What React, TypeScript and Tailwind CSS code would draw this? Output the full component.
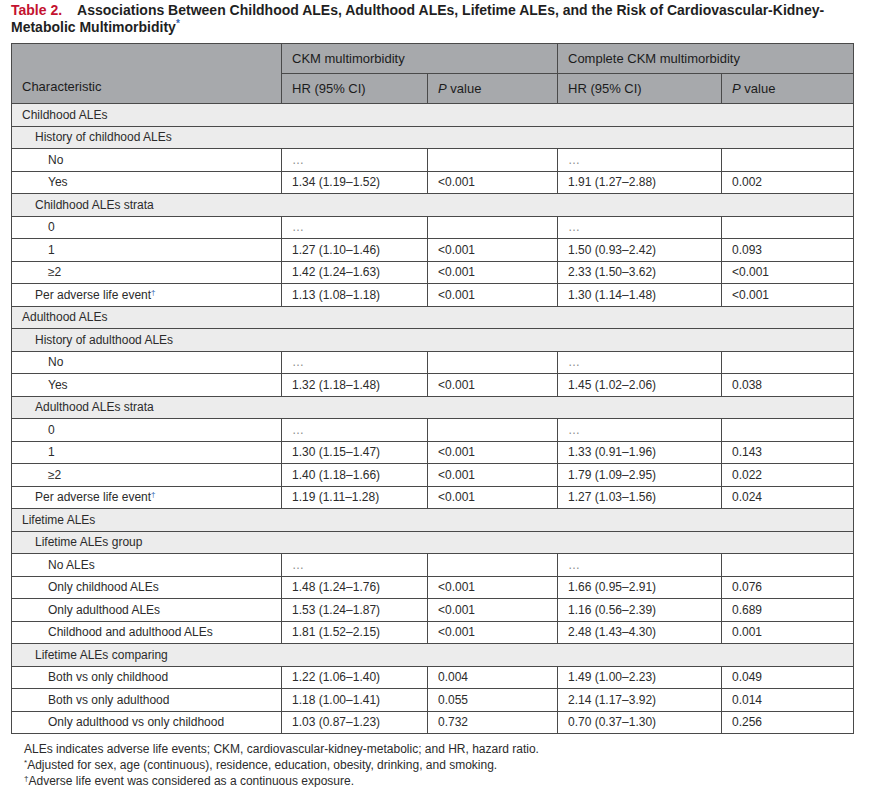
type Row = {
  label: string;
  level: 0 | 1 | 2;
  section?: boolean;
  dagger?: boolean;
  v?: [string, string, string, string];
};

const E = "…";

const rows: Row[] = [
  { label: "Childhood ALEs", level: 0, section: true },
  { label: "History of childhood ALEs", level: 1, section: true },
  { label: "No", level: 2, v: [E, "", E, ""] },
  { label: "Yes", level: 2, v: ["1.34 (1.19–1.52)", "<0.001", "1.91 (1.27–2.88)", "0.002"] },
  { label: "Childhood ALEs strata", level: 1, section: true },
  { label: "0", level: 2, v: [E, "", E, ""] },
  { label: "1", level: 2, v: ["1.27 (1.10–1.46)", "<0.001", "1.50 (0.93–2.42)", "0.093"] },
  { label: "≥2", level: 2, v: ["1.42 (1.24–1.63)", "<0.001", "2.33 (1.50–3.62)", "<0.001"] },
  { label: "Per adverse life event", level: 1, dagger: true, v: ["1.13 (1.08–1.18)", "<0.001", "1.30 (1.14–1.48)", "<0.001"] },
  { label: "Adulthood ALEs", level: 0, section: true },
  { label: "History of adulthood ALEs", level: 1, section: true },
  { label: "No", level: 2, v: [E, "", E, ""] },
  { label: "Yes", level: 2, v: ["1.32 (1.18–1.48)", "<0.001", "1.45 (1.02–2.06)", "0.038"] },
  { label: "Adulthood ALEs strata", level: 1, section: true },
  { label: "0", level: 2, v: [E, "", E, ""] },
  { label: "1", level: 2, v: ["1.30 (1.15–1.47)", "<0.001", "1.33 (0.91–1.96)", "0.143"] },
  { label: "≥2", level: 2, v: ["1.40 (1.18–1.66)", "<0.001", "1.79 (1.09–2.95)", "0.022"] },
  { label: "Per adverse life event", level: 1, dagger: true, v: ["1.19 (1.11–1.28)", "<0.001", "1.27 (1.03–1.56)", "0.024"] },
  { label: "Lifetime ALEs", level: 0, section: true },
  { label: "Lifetime ALEs group", level: 1, section: true },
  { label: "No ALEs", level: 2, v: [E, "", E, ""] },
  { label: "Only childhood ALEs", level: 2, v: ["1.48 (1.24–1.76)", "<0.001", "1.66 (0.95–2.91)", "0.076"] },
  { label: "Only adulthood ALEs", level: 2, v: ["1.53 (1.24–1.87)", "<0.001", "1.16 (0.56–2.39)", "0.689"] },
  { label: "Childhood and adulthood ALEs", level: 2, v: ["1.81 (1.52–2.15)", "<0.001", "2.48 (1.43–4.30)", "0.001"] },
  { label: "Lifetime ALEs comparing", level: 1, section: true },
  { label: "Both vs only childhood", level: 2, v: ["1.22 (1.06–1.40)", "0.004", "1.49 (1.00–2.23)", "0.049"] },
  { label: "Both vs only adulthood", level: 2, v: ["1.18 (1.00–1.41)", "0.055", "2.14 (1.17–3.92)", "0.014"] },
  { label: "Only adulthood vs only childhood", level: 2, v: ["1.03 (0.87–1.23)", "0.732", "0.70 (0.37–1.30)", "0.256"] },
];

const indent = ["pl-[10px]", "pl-[23px]", "pl-[36px]"];

export default function App() {
  return (
    <div className="w-[879px] bg-white text-[#2b2b2b]" style={{ fontFamily: '"Liberation Sans", Arial, sans-serif' }}>
      <h2 className="pl-[11px] pt-[2px] text-[14px] font-bold leading-[17px] text-[#1f1f1f]">
        <div className="flex">
          <span className="mr-[15px] text-[#c4122f]">Table 2.</span>
          <span>Associations Between Childhood ALEs, Adulthood ALEs, Lifetime ALEs, and the Risk of Cardiovascular-Kidney-</span>
        </div>
        <div className="flex items-start">
          <span>Metabolic Multimorbidity</span>
          <span className="text-[10px] leading-[10px] text-[#2f62b0]">*</span>
        </div>
      </h2>

      <table className="mt-[7px] ml-[11px] w-[842px] table-fixed border-collapse border border-[#4a4a4a] text-[12px]">
        <colgroup>
          <col className="w-[270px]" />
          <col className="w-[146px]" />
          <col className="w-[130px]" />
          <col className="w-[164px]" />
          <col className="w-[132px]" />
        </colgroup>
        <thead className="bg-[#a7a9ac] text-[13px] text-[#1c1c1c]">
          <tr className="h-[30px]">
            <th rowSpan={2} className="border border-[#4a4a4a] pb-[7px] pl-[10px] text-left align-bottom font-normal">
              Characteristic
            </th>
            <th colSpan={2} className="border border-[#4a4a4a] pl-[10px] text-left font-normal">
              CKM multimorbidity
            </th>
            <th colSpan={2} className="border border-[#4a4a4a] pl-[10px] text-left font-normal">
              Complete CKM multimorbidity
            </th>
          </tr>
          <tr className="h-[30px]">
            <th className="border border-[#4a4a4a] pl-[10px] text-left font-normal">HR (95% CI)</th>
            <th className="border border-[#4a4a4a] pl-[10px] text-left font-normal">
              <i>P</i> value
            </th>
            <th className="border border-[#4a4a4a] pl-[10px] text-left font-normal">HR (95% CI)</th>
            <th className="border border-[#4a4a4a] pl-[10px] text-left font-normal">
              <i>P</i> value
            </th>
          </tr>
        </thead>
        <tbody>
          {rows.map((r, i) =>
            r.section ? (
              <tr key={i} className="h-[22.5px] bg-[#ececec]">
                <td colSpan={5} className={`border border-[#4a4a4a] p-0 ${indent[r.level]}`}>
                  {r.label}
                </td>
              </tr>
            ) : (
              <tr key={i} className="h-[22.5px] bg-white">
                <td className={`border border-[#4a4a4a] p-0 ${indent[r.level]}`}>
                  {r.label}
                  {r.dagger && <span className="relative -top-[4px] text-[8px] leading-none text-[#2f62b0]">†</span>}
                </td>
                {r.v!.map((c, j) => (
                  <td key={j} className={`border border-[#4a4a4a] p-0 pl-[10px] ${c === E ? "text-[#8a8a8a]" : ""}`}>
                    {c}
                  </td>
                ))}
              </tr>
            )
          )}
        </tbody>
      </table>

      <div className="mt-[7px] pl-[24px] text-[12px] leading-[16px] text-[#2b2b2b]">
        <p>ALEs indicates adverse life events; CKM, cardiovascular-kidney-metabolic; and HR, hazard ratio.</p>
        <p>
          <span className="relative -top-[4px] text-[8px] leading-none">*</span>Adjusted for sex, age (continuous), residence, education, obesity, drinking, and smoking.
        </p>
        <p>
          <span className="relative -top-[4px] text-[8px] leading-none">†</span>Adverse life event was considered as a continuous exposure.
        </p>
      </div>
    </div>
  );
}
